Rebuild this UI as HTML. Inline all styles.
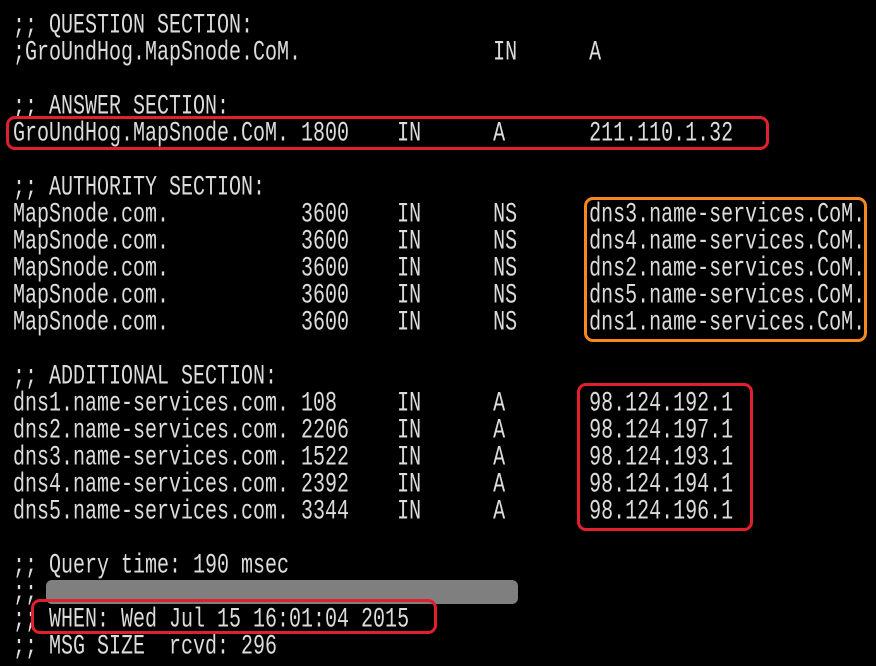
<!DOCTYPE html>
<html><head><style>
html,body{margin:0;padding:0;background:#000;width:876px;height:666px;overflow:hidden;position:relative}
.t{position:absolute;left:13px;top:13px;font-family:"Liberation Mono",monospace;font-size:20px;line-height:27px;color:#dcdcdc;white-space:pre;margin:0}
.t div{height:27px;transform:scaleY(1.38);transform-origin:50% 52%}
.b{position:absolute;border-radius:9px;box-sizing:border-box}
.r{border:3px solid #e0202c}
.o{border:3px solid #f5891e}
</style></head><body>
<div class="t"><div>;; QUESTION SECTION:</div><div>;GroUndHog.MapSnode.CoM.                IN      A</div><div> </div><div>;; ANSWER SECTION:</div><div>GroUndHog.MapSnode.CoM. 1800    IN      A       211.110.1.32</div><div> </div><div>;; AUTHORITY SECTION:</div><div>MapSnode.com.           3600    IN      NS      dns3.name-services.CoM.</div><div>MapSnode.com.           3600    IN      NS      dns4.name-services.CoM.</div><div>MapSnode.com.           3600    IN      NS      dns2.name-services.CoM.</div><div>MapSnode.com.           3600    IN      NS      dns5.name-services.CoM.</div><div>MapSnode.com.           3600    IN      NS      dns1.name-services.CoM.</div><div> </div><div>;; ADDITIONAL SECTION:</div><div>dns1.name-services.com. 108     IN      A       98.124.192.1</div><div>dns2.name-services.com. 2206    IN      A       98.124.197.1</div><div>dns3.name-services.com. 1522    IN      A       98.124.193.1</div><div>dns4.name-services.com. 2392    IN      A       98.124.194.1</div><div>dns5.name-services.com. 3344    IN      A       98.124.196.1</div><div> </div><div>;; Query time: 190 msec</div><div>;;</div><div>;; WHEN: Wed Jul 15 16:01:04 2015</div><div>;; MSG SIZE  rcvd: 296</div></div>
<div style="position:absolute;left:46px;top:580px;width:472px;height:24px;background:#7f7f7f;border-radius:6px"></div>
<div class="b r" style="left:6px;top:116px;width:763px;height:34px"></div>
<div class="b o" style="left:584px;top:197px;width:283px;height:145px"></div>
<div class="b r" style="left:577px;top:383px;width:176px;height:148px"></div>
<div class="b r" style="left:31px;top:599px;width:406px;height:35px"></div>
</body></html>
